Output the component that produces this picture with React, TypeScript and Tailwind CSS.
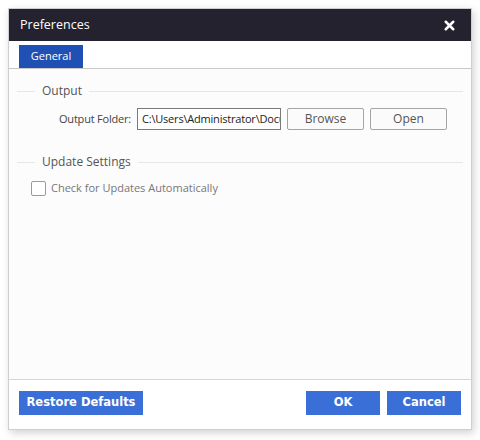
import { X } from 'lucide-react';

function SectionTitle({ label }: { label: string }) {
    return (
        <div className="flex items-center h-[16px]">
            <div className="w-[18px] h-px bg-[#e6e6e6]" />
            <span className="px-[7px] text-[12px] text-[#555] whitespace-nowrap">{label}</span>
            <div className="flex-1 h-px bg-[#e6e6e6]" />
        </div>
    );
}

export default function App() {
    return (
        <div className="w-[480px] h-[440px] bg-white pl-[8px] pt-[8px]" style={{ fontFamily: '"Open Sans", "Noto Sans", sans-serif' }}>
            <div className="w-[464px] h-[422px] flex flex-col bg-[#fcfcfc] border border-[#cfcfcf] shadow-[2px_3px_8px_rgba(0,0,0,0.18)]">
                {/* title bar */}
                <div className="h-[32px] bg-[#23222e] flex items-center justify-between pl-[11px] pr-[14px] shrink-0">
                    <span className="text-white text-[12.5px]">Preferences</span>
                    <X className="text-white w-[15px] h-[15px]" strokeWidth={4} />
                </div>

                {/* tabs */}
                <div className="pt-[4px] pl-[10px] border-b border-[#c8c8c8] bg-white shrink-0">
                    <div className="w-[64px] h-[23px] bg-[#1f50b4] text-white text-[11px] flex items-center justify-center">
                        General
                    </div>
                </div>

                <div className="flex-1 px-[8px] pt-[14px]">
                    <SectionTitle label="Output" />
                    <div className="flex items-center mt-[9px] pl-[42px]">
                        <span className="w-[78px] shrink-0 whitespace-nowrap text-[11px] tracking-[-0.2px] text-[#444]">Output Folder:</span>
                        <div className="w-[144px] shrink-0 h-[22px] border border-[#7a7a7a] bg-white text-[11px] tracking-[-0.2px] text-[#222] pl-[4px] overflow-hidden">
                            <span className="block whitespace-nowrap leading-[20px]">C:\Users\Administrator\Docu</span>
                        </div>
                        <button className="ml-[6px] w-[77px] shrink-0 h-[22px] border border-[#a5a5a5] rounded-[2px] bg-[#fbfbfb] text-[12px] text-[#555]">
                            Browse
                        </button>
                        <button className="ml-[6px] w-[77px] shrink-0 h-[22px] border border-[#a5a5a5] rounded-[2px] bg-[#fbfbfb] text-[12px] text-[#555]">
                            Open
                        </button>
                    </div>

                    <div className="mt-[24px]">
                        <SectionTitle label="Update Settings" />
                    </div>
                    <label className="flex items-center mt-[10px] pl-[14px]">
                        <span className="w-[15px] h-[15px] border border-[#9a9a9a] rounded-[2px] bg-white" />
                        <span className="ml-[5px] text-[11px] text-[#777]">Check for Updates Automatically</span>
                    </label>
                </div>

                {/* footer */}
                <div className="h-[50px] border-t border-[#d6d6d6] flex items-start justify-between pt-[11px] px-[10px] shrink-0 bg-white">
                    <button className="w-[124px] h-[24px] bg-[#3a6fd8] text-white text-[11.5px] font-bold" style={{ fontFamily: '"DejaVu Sans", sans-serif' }}>
                        Restore Defaults
                    </button>
                    <div className="flex gap-[7px]">
                        <button className="w-[74px] h-[24px] bg-[#3a6fd8] text-white text-[11.5px] font-bold" style={{ fontFamily: '"DejaVu Sans", sans-serif' }}>
                            OK
                        </button>
                        <button className="w-[74px] h-[24px] bg-[#3a6fd8] text-white text-[11.5px] font-bold" style={{ fontFamily: '"DejaVu Sans", sans-serif' }}>
                            Cancel
                        </button>
                    </div>
                </div>
            </div>
        </div>
    );
}
